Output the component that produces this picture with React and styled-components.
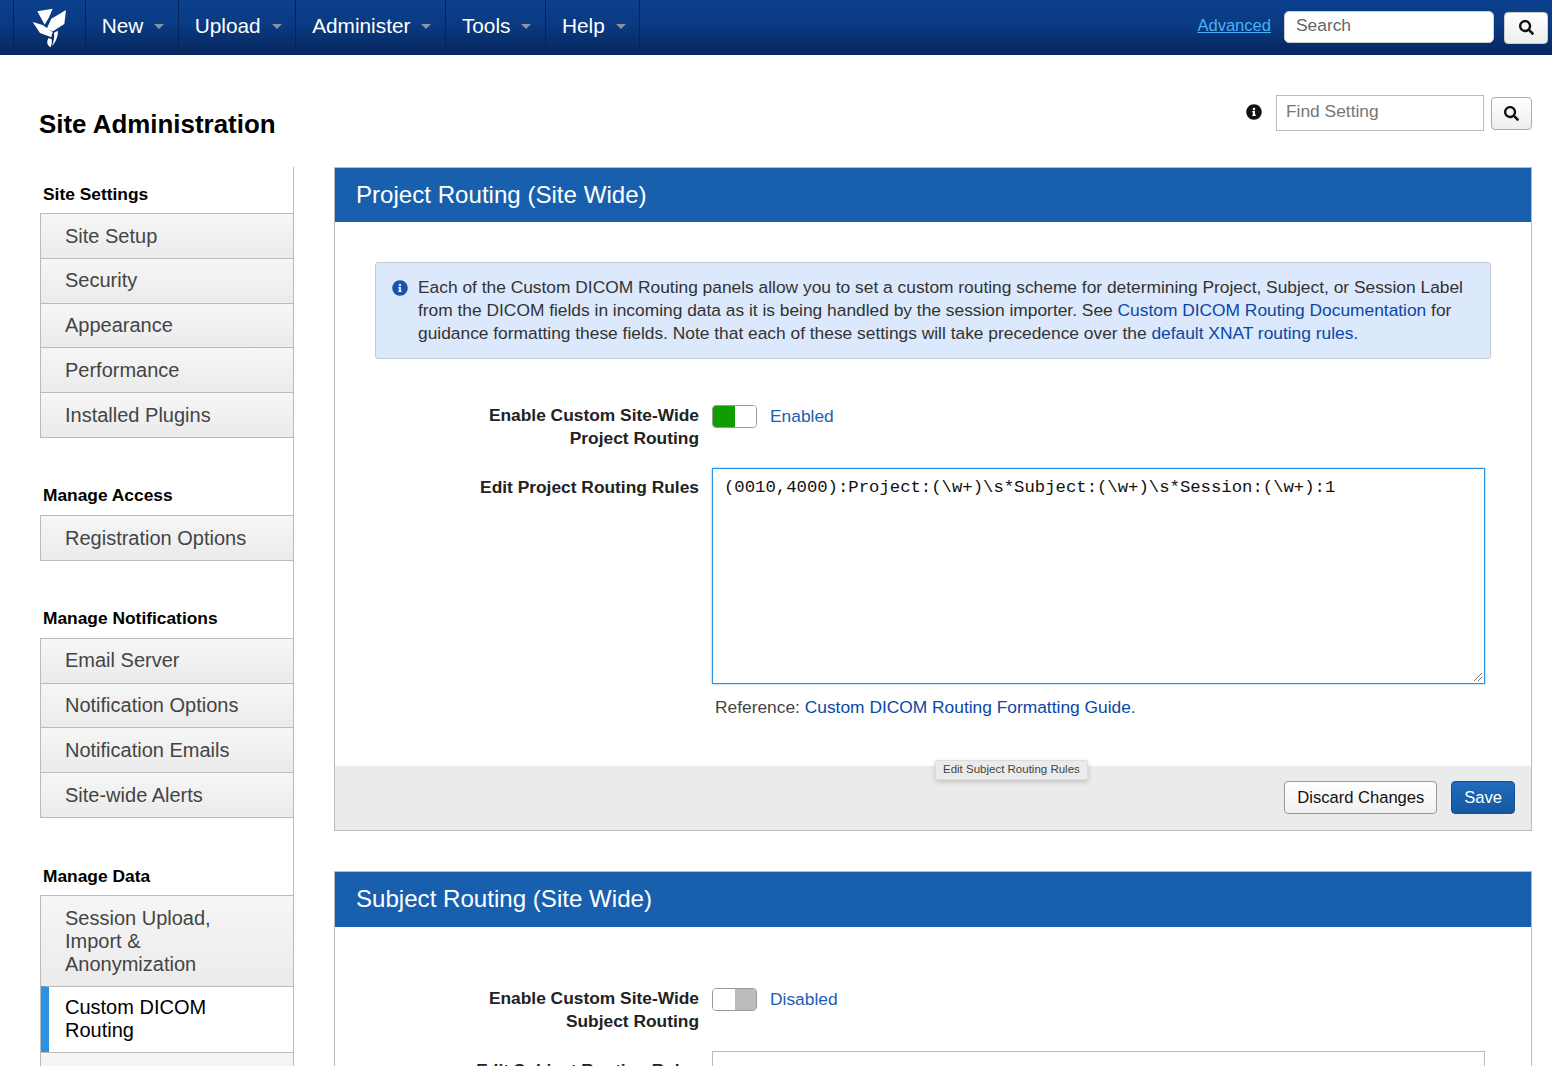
import React from 'react';
import styled, { createGlobalStyle } from 'styled-components';
import { FaInfoCircle, FaSearch } from 'react-icons/fa';

const Global = createGlobalStyle`
  html, body { margin: 0; padding: 0; height: 1066px; overflow: hidden; background: #fff; }
  body { font-family: "Liberation Sans", Arial, sans-serif; color: #333; }
  * { box-sizing: border-box; }
`;

const NavBar = styled.header`
  height: 55px; display: flex; align-items: stretch; padding-left: 13px;
  background: linear-gradient(#0b408f 0%, #0a3a82 45%, #06265c 100%);
`;
const NavCell = styled.div`
  display: flex; align-items: center; gap: 11px; padding: 0 13.3px 4px 16.2px;
  border-right: 1px solid #052459;
  color: #fff; font-size: 20.8px; white-space: nowrap;
`;
const LogoCell = styled(NavCell)`
  width: 72.5px; padding: 0; justify-content: center;
  border-left: 1px solid #052459;
`;
const Caret = styled.span`
  width: 0; height: 0; border-left: 5px solid transparent; border-right: 5px solid transparent;
  border-top: 5px solid #8a93a3; margin-top: 2px;
`;
const NavRight = styled.div`
  margin-left: auto; display: flex; align-items: center; padding-right: 4px;
`;
const AdvancedLink = styled.a`
  color: #4bb0f7; font-size: 16.56px; text-decoration: underline; margin: -3px 13px 0 0;
`;
const NavSearchInput = styled.div`
  width: 210px; height: 32px; background: #fff; border: 1px solid #ccc; border-radius: 5px;
  padding-left: 11px; font-size: 17.36px; line-height: 27px; color: #666; margin-top: -1px;
`;
const IconButton = styled.div`
  display: flex; align-items: center; justify-content: center; color: #111; font-size: 15px;
  background: linear-gradient(#fff, #eee); border: 1px solid #aaa; border-radius: 4px;
`;
const NavSearchButton = styled(IconButton)`
  width: 44px; height: 32px; margin-left: 10px; border-color: #ccc;
`;

const Page = styled.div`padding: 0 20px 0 39px;`;
const TitleRow = styled.div`
  height: 112px; display: flex; align-items: flex-start; justify-content: space-between;
`;
const Title = styled.h1`
  margin: 54px 0 0; font-size: 25.92px; line-height: 31px; font-weight: 700; color: #000;
`;
const FindBox = styled.div`
  display: flex; align-items: center; margin-top: 40px; height: 36px;
`;
const FindInfo = styled.span`
  display: flex; font-size: 16px; color: #111; margin: -2px 14px 0 0;
`;
const FindInput = styled.div`
  width: 208px; height: 36px; border: 1px solid #bbb; padding-left: 9px;
  font-size: 17.36px; line-height: 31px; color: #777; background: #fff;
`;
const FindButton = styled(IconButton)`
  width: 41px; height: 33px; margin-left: 7px; margin-top: 1px;
`;

const Columns = styled.div`display: flex; align-items: flex-start;`;
const Sidebar = styled.nav`
  width: 254px; margin-left: 1px; flex: none; border-right: 1px solid #bbb; height: 900px;
`;
const SideSection = styled.section`margin-bottom: 31.2px;`;
const SideHead = styled.h3`
  margin: 0; height: 46px; padding: 15.5px 0 0 3px; font-size: 17.36px; line-height: 23px;
  font-weight: 700; color: #000;
`;
const SideList = styled.ul`
  list-style: none; margin: 0; padding: 0; border-left: 1px solid #bbb; border-bottom: 1px solid #bbb;
`;
const SideItem = styled.li`
  border-top: 1px solid #bbb; padding: ${p => (p.$active ? '9.5px' : '10.6px')} 40px ${p => (p.$active ? '9.5px' : '10.15px')} 24px;
  font-size: 20px; line-height: 23px; color: ${p => (p.$active ? '#000' : '#444')};
  min-height: 44.75px;
  background: ${p => (p.$active ? '#fff' : 'linear-gradient(#f6f6f6, #ebebeb)')};
  border-left: ${p => (p.$active ? '8px solid #2a92e4' : 'none')};
  padding-left: ${p => (p.$active ? '16px' : '24px')};
`;

const Main = styled.main`flex: 1; margin-left: 40px; min-width: 0;`;
const Panel = styled.section`
  border: 1px solid #bbb; margin-bottom: 40px; background: #fff; position: relative;
`;
const PanelHead = styled.h2`
  margin: 0; height: ${p => p.$h || 54}px; background: #1860ae; color: #fff; padding-left: 21px;
  font-size: 24.1px; line-height: 54px; font-weight: 400;
`;
const PanelBody = styled.div`padding: 40px 40px 0;`;
const InfoBox = styled.div`
  display: flex; gap: 10px; background: #dce8fb; border: 1px solid #c2c9d4; border-radius: 3px;
  padding: 13px 10px 13px 16px; font-size: 17.36px; line-height: 23px; color: #333; height: 97px;
`;
const InfoIcon = styled.span`
  display: flex; flex: none; font-size: 16px; color: #1c52a8; padding-top: 4px;
`;
const Link = styled.a`color: #0a47a5;`;
const FormRow = styled.div`
  display: grid; grid-template-columns: 364px 1fr; column-gap: 13px; margin-left: -40px;
  margin-right: 6px; margin-top: ${p => p.$top || 0}px;
`;
const Label = styled.label`
  text-align: right; font-size: 17.36px; line-height: 23px; font-weight: 700; color: #222;
  padding-top: ${p => p.$pad || 0}px; margin-top: ${p => (p.$pad ? 0 : -1)}px;
`;
const ToggleLine = styled.div`display: flex; align-items: flex-start; gap: 13px;`;
const Toggle = styled.div`
  width: 45px; height: 23px; display: flex; border: 1px solid #999; border-radius: 4px; overflow: hidden;
`;
const ToggleHalf = styled.span`
  flex: 1; background: ${p => p.$color};
`;
const ToggleText = styled.span`font-size: 17.36px; line-height: 23px; color: #1a60b4;`;
const Rules = styled.div`
  position: relative; height: 216px; background: #fff;
  border: 1px solid ${p => (p.$plain ? '#bbb' : '#2a92e4')};
  box-shadow: ${p => (p.$plain ? 'none' : '0 0 2px rgba(42,146,228,.7)')};
  padding: 8px 11px; font-family: "Liberation Mono", "Courier New", monospace;
  font-size: 17.28px; line-height: 21px; color: #111;
`;
const Grip = styled.svg`position: absolute; right: 1px; bottom: 1px;`;
const RefLine = styled.p`
  margin: 12px 0 0 3px; font-size: 17.36px; line-height: 23px; color: #444;
`;
const PanelFoot = styled.footer`
  position: relative; margin-top: 47px; height: 64px; background: #ebebeb;
  display: flex; justify-content: flex-end; align-items: flex-start; gap: 14px; padding: 15px 16px 0 0;
`;
const Tip = styled.div`
  position: absolute; left: 600px; top: -6px; height: 20px; padding: 0 7px; white-space: nowrap;
  background: #ebebeb; border: 1px solid #ddd; border-radius: 2px; box-shadow: 0 2px 5px rgba(0,0,0,.18);
  font-size: 11.5px; line-height: 16px; color: #444;
`;
const FootButton = styled.button`
  height: 33px; padding: 0 12px; font: 400 16.56px "Liberation Sans", Arial, sans-serif; border-radius: 4px;
  color: ${p => (p.$primary ? '#fff' : '#111')};
  background: ${p => (p.$primary ? 'linear-gradient(#1f6cbe, #15589f)' : 'linear-gradient(#fff, #f0f0f0)')};
  border: 1px solid ${p => (p.$primary ? '#14528f' : '#999')};
`;

const sections = [
  ['Site Settings', ['Site Setup', 'Security', 'Appearance', 'Performance', 'Installed Plugins']],
  ['Manage Access', ['Registration Options']],
  ['Manage Notifications', ['Email Server', 'Notification Options', 'Notification Emails', 'Site-wide Alerts']],
];

const Logo = () => (
  <svg width="35" height="40" viewBox="68 22 105 120" fill="#fff">
    <path d="M84 32 L130 24 L119 50 L106 72 Z" />
    <path d="M170 28 L165 70 L131 92 L112 84 L126 54 Z" />
    <path d="M70 64 L100 73 L130 94 L126 110 L92 97 Z" />
    <path d="M134 96 L146 90 C146 110 138 125 128 136 C133 122 136 110 134 96 Z" />
    <path d="M118 112 L127 116 C129 126 126 134 124 140 C114 134 110 124 118 112 Z" />
  </svg>
);

export default function App() {
  return (
    <>
      <Global />
      <NavBar>
        <LogoCell><Logo /></LogoCell>
        {['New', 'Upload', 'Administer', 'Tools', 'Help'].map(n => (
          <NavCell key={n}>{n}<Caret /></NavCell>
        ))}
        <NavRight>
          <AdvancedLink>Advanced</AdvancedLink>
          <NavSearchInput>Search</NavSearchInput>
          <NavSearchButton><FaSearch /></NavSearchButton>
        </NavRight>
      </NavBar>
      <Page>
        <TitleRow>
          <Title>Site Administration</Title>
          <FindBox>
            <FindInfo><FaInfoCircle /></FindInfo>
            <FindInput>Find Setting</FindInput>
            <FindButton><FaSearch /></FindButton>
          </FindBox>
        </TitleRow>
        <Columns>
          <Sidebar>
            {sections.map(([head, items]) => (
              <SideSection key={head}>
                <SideHead>{head}</SideHead>
                <SideList>
                  {items.map(i => <SideItem key={i}>{i}</SideItem>)}
                </SideList>
              </SideSection>
            ))}
            <SideSection>
              <SideHead>Manage Data</SideHead>
              <SideList>
                <SideItem>Session Upload, Import &amp; Anonymization</SideItem>
                <SideItem $active>Custom DICOM Routing</SideItem>
                <SideItem />
              </SideList>
            </SideSection>
          </Sidebar>
          <Main>
            <Panel>
              <PanelHead>Project Routing (Site Wide)</PanelHead>
              <PanelBody>
                <InfoBox>
                  <InfoIcon><FaInfoCircle /></InfoIcon>
                  <div>
                    Each of the Custom DICOM Routing panels allow you to set a custom routing scheme for determining Project, Subject, or Session Label from the DICOM fields in incoming data as it is being handled by the session importer. See <Link>Custom DICOM Routing Documentation</Link> for guidance formatting these fields. Note that each of these settings will take precedence over the <Link>default XNAT routing rules.</Link>
                  </div>
                </InfoBox>
                <FormRow $top={46}>
                  <Label>Enable Custom Site-Wide<br />Project Routing</Label>
                  <ToggleLine>
                    <Toggle><ToggleHalf $color="#129c00" /><ToggleHalf $color="#fff" /></Toggle>
                    <ToggleText>Enabled</ToggleText>
                  </ToggleLine>
                </FormRow>
                <FormRow $top={18}>
                  <Label $pad={8}>Edit Project Routing Rules</Label>
                  <div>
                    <Rules>
                      {'(0010,4000):Project:(\\w+)\\s*Subject:(\\w+)\\s*Session:(\\w+):1'}
                      <Grip width="10" height="10" viewBox="0 0 10 10" stroke="#777" fill="none">
                        <path d="M1 9 L9 1 M5 9 L9 5" />
                      </Grip>
                    </Rules>
                    <RefLine>Reference: <Link>Custom DICOM Routing Formatting Guide.</Link></RefLine>
                  </div>
                </FormRow>
              </PanelBody>
              <PanelFoot>
                <Tip>Edit Subject Routing Rules</Tip>
                <FootButton>Discard Changes</FootButton>
                <FootButton $primary>Save</FootButton>
              </PanelFoot>
            </Panel>
            <Panel>
              <PanelHead $h={55}>Subject Routing (Site Wide)</PanelHead>
              <PanelBody>
                <FormRow $top={21}>
                  <Label>Enable Custom Site-Wide<br />Subject Routing</Label>
                  <ToggleLine>
                    <Toggle><ToggleHalf $color="#fff" /><ToggleHalf $color="#bbb" /></Toggle>
                    <ToggleText>Disabled</ToggleText>
                  </ToggleLine>
                </FormRow>
                <FormRow $top={18}>
                  <Label $pad={8}>Edit Subject Routing Rules</Label>
                  <Rules $plain />
                </FormRow>
              </PanelBody>
            </Panel>
          </Main>
        </Columns>
      </Page>
    </>
  );
}
